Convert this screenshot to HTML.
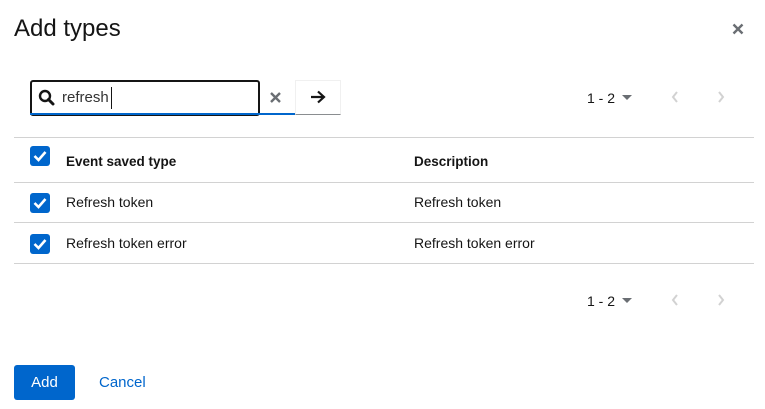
<!DOCTYPE html>
<html><head><style>
body{margin:0;width:765px;height:409px;background:#fff;font-family:"Liberation Sans",sans-serif;color:#151515;position:relative;overflow:hidden}
.a{position:absolute}
.cb{position:absolute;width:20px;height:20px;background:#0066cc;border-radius:3px}
.cb svg{position:absolute;left:3px;top:4px}
.t{font-size:14px}
.line{position:absolute;left:14px;width:740px;height:1px;background:#d2d2d2}
.pg{font-size:14px}
</style></head><body>
<div class="a" style="left:14px;top:15px;font-size:24px">Add types</div>
<svg class="a" style="left:732px;top:23px" width="12" height="12" viewBox="0 0 12 12"><path d="M1.5 1.5L10.5 10.5M10.5 1.5L1.5 10.5" stroke="#6a6e73" stroke-width="2.4"/></svg>

<div class="a" style="left:30px;top:80px;width:226px;height:32px;border:2px solid #151515;border-radius:3px"></div>
<div class="a" style="left:30px;top:113px;width:265px;height:2px;background:#0066cc"></div>
<svg class="a" style="left:38px;top:89px" width="17" height="17" viewBox="0 0 17 17"><circle cx="7" cy="7" r="5" fill="none" stroke="#151515" stroke-width="2.4"/><path d="M10.5 10.5L15 15" stroke="#151515" stroke-width="3" stroke-linecap="round"/></svg>
<div class="a t" style="left:62px;top:89px;font-size:15px;color:#333">refresh</div>
<div class="a" style="left:111px;top:87px;width:1px;height:22px;background:#151515"></div>
<svg class="a" style="left:270px;top:92px" width="11" height="11" viewBox="0 0 11 11"><path d="M1 1L10 10M10 1L1 10" stroke="#6a6e73" stroke-width="2.4"/></svg>
<div class="a" style="left:295px;top:80px;width:46px;border:1px solid #f0f0f0;border-bottom:1px solid #8a8d90;box-sizing:border-box;height:35px"></div>
<svg class="a" style="left:310px;top:90px" width="16" height="14" viewBox="0 0 16 14"><path d="M1 7H14M8 1.5L14 7L8 12.5" fill="none" stroke="#151515" stroke-width="2.2"/></svg>

<div class="a pg" style="left:587px;top:90px">1 - 2</div>
<svg class="a" style="left:622px;top:95px" width="10" height="6"><path d="M0 0H10L5 5Z" fill="#6a6e73"/></svg>
<svg class="a" style="left:671px;top:91px" width="8" height="12"><path d="M6 1L2 6L6 11" fill="none" stroke="#d2d2d2" stroke-width="2"/></svg>
<svg class="a" style="left:717px;top:91px" width="8" height="12"><path d="M2 1L6 6L2 11" fill="none" stroke="#d2d2d2" stroke-width="2"/></svg>

<div class="line" style="top:137px"></div>
<div class="cb" style="left:30px;top:146px"><svg width="14" height="12" viewBox="0 0 14 12"><path d="M1.5 6L5.5 10L12.5 2" fill="none" stroke="#fff" stroke-width="2.6"/></svg></div>
<div class="a t" style="left:66px;top:154px;font-weight:bold;font-size:13.5px">Event saved type</div>
<div class="a t" style="left:414px;top:154px;font-weight:bold;font-size:13.5px">Description</div>
<div class="line" style="top:182px"></div>
<div class="cb" style="left:30px;top:193px"><svg width="14" height="12" viewBox="0 0 14 12"><path d="M1.5 6L5.5 10L12.5 2" fill="none" stroke="#fff" stroke-width="2.6"/></svg></div>
<div class="a t" style="left:66px;top:194px">Refresh token</div>
<div class="a t" style="left:414px;top:194px">Refresh token</div>
<div class="line" style="top:222px"></div>
<div class="cb" style="left:30px;top:234px"><svg width="14" height="12" viewBox="0 0 14 12"><path d="M1.5 6L5.5 10L12.5 2" fill="none" stroke="#fff" stroke-width="2.6"/></svg></div>
<div class="a t" style="left:66px;top:235px">Refresh token error</div>
<div class="a t" style="left:414px;top:235px">Refresh token error</div>
<div class="line" style="top:263px"></div>

<div class="a pg" style="left:587px;top:293px">1 - 2</div>
<svg class="a" style="left:622px;top:298px" width="10" height="6"><path d="M0 0H10L5 5Z" fill="#6a6e73"/></svg>
<svg class="a" style="left:671px;top:294px" width="8" height="12"><path d="M6 1L2 6L6 11" fill="none" stroke="#d2d2d2" stroke-width="2"/></svg>
<svg class="a" style="left:717px;top:294px" width="8" height="12"><path d="M2 1L6 6L2 11" fill="none" stroke="#d2d2d2" stroke-width="2"/></svg>

<div class="a" style="left:14px;top:365px;width:61px;height:35px;background:#0066cc;border-radius:3px;color:#fff;font-size:15px;text-align:center;line-height:35px">Add</div>
<div class="a" style="left:99px;top:374px;color:#0066cc;font-size:15px">Cancel</div>
</body></html>
